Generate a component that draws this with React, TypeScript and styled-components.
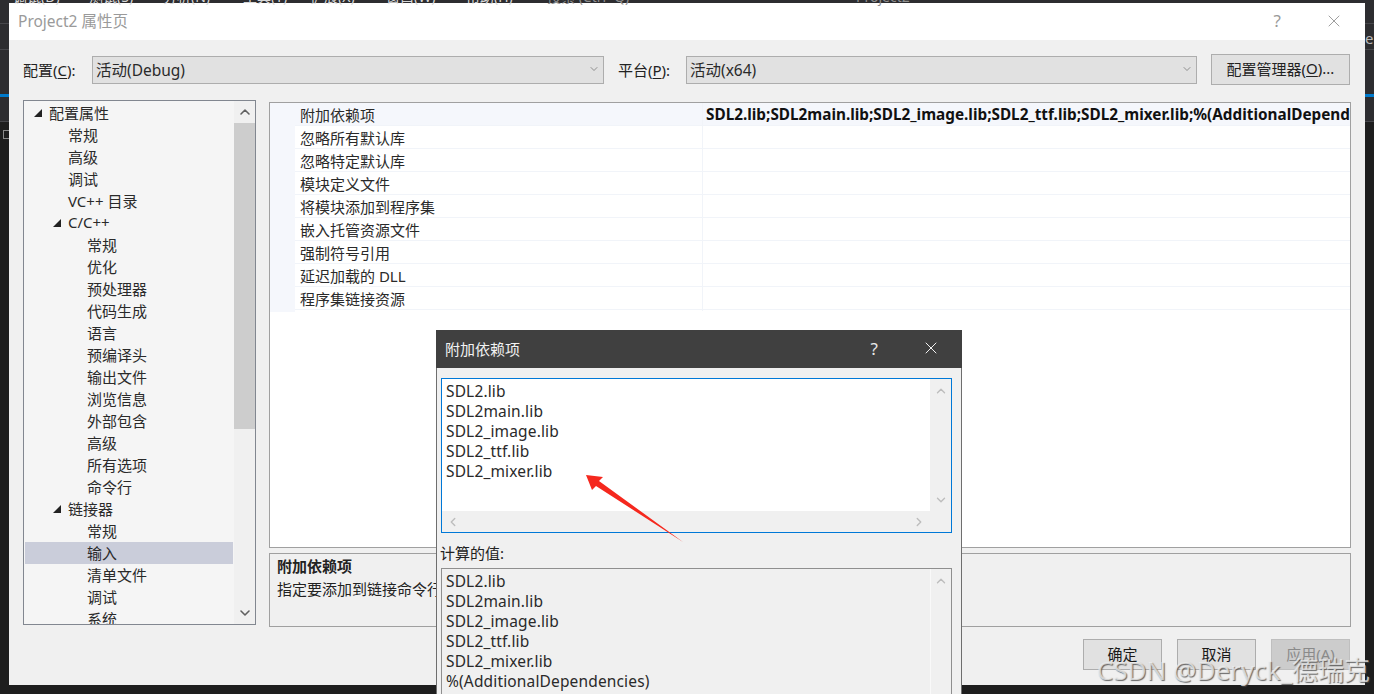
import React from "react";
import styled, { createGlobalStyle } from "styled-components";
import { ChevronDown, ChevronUp, ChevronLeft, ChevronRight, X } from "lucide-react";

const FONT = `"Noto Sans", "Noto Sans CJK SC", sans-serif`;

const GlobalStyle = createGlobalStyle`
  html, body {
    margin: 0;
    padding: 0;
    width: 1374px;
    height: 694px;
    overflow: hidden;
    background: #1e1e1e;
    font-family: ${FONT};
    font-size: 15px;
    color: #222;
  }
  * { box-sizing: border-box; }
`;

const Page = styled.div`
  position: relative;
  width: 1374px;
  height: 694px;
  overflow: hidden;
  padding: 3px 9px 9px;
  background:
    linear-gradient(#47474b, #47474b) 0 23px / 100% 1px no-repeat,
    linear-gradient(#47474b, #47474b) 0 49px / 100% 1px no-repeat,
    linear-gradient(#007acc, #007acc) 0 94px / 100% 3px no-repeat,
    linear-gradient(#47474b, #47474b) 0 121px / 100% 1px no-repeat,
    linear-gradient(#2d2d30, #2d2d30) 0 0 / 100% 121px no-repeat,
    #1e1e1e;
`;

const Backdrop = styled.div`
  position: absolute;
  left: 13px;
  top: -10px;
  display: flex;
  color: #d8d8d8;
  font-size: 14px;
  line-height: 14px;
  white-space: nowrap;
`;

const MenuItem = styled.span<{ $w: number; $dim?: boolean }>`
  width: ${(p) => p.$w}px;
  flex: none;
  color: ${(p) => (p.$dim ? "#8f8f8f" : "#d8d8d8")};
`;

const EdgeBox = styled.div`
  position: absolute;
  left: 3px;
  top: 130px;
  width: 6px;
  height: 9px;
  border: 1px solid #8a8a8a;
  border-right: none;
`;

const EdgeLetter = styled.span`
  position: absolute;
  left: 1365px;
  top: 28px;
  color: #b8b8b8;
  font-size: 15px;
  line-height: 20px;
`;

const Window = styled.div`
  width: 1356px;
  height: 682px;
  background: #f0f0f0;
  display: flex;
  flex-direction: column;
`;

const TitleBar = styled.div`
  height: 37px;
  flex: none;
  background: #fff;
  display: flex;
  align-items: center;
  padding: 0 21px 2px 9px;
  color: #9a9a9a;
  font-size: 15.5px;
`;

const TitleText = styled.span`
  flex: 1;
`;

const TitleQuestion = styled.span`
  font-size: 17px;
  color: #9a9a9a;
  margin-right: 43px;
`;

const ConfigRow = styled.div`
  height: 60px;
  flex: none;
  display: flex;
  align-items: center;
  padding: 0 15px 0 14px;
`;

const ConfigLabel = styled.span`
  font-size: 15px;
  width: 69px;
  flex: none;
  padding-bottom: 2px;
  u { text-underline-offset: 2px; }
`;

const Combo = styled.div<{ $w: number }>`
  width: ${(p) => p.$w}px;
  height: 28px;
  flex: none;
  background: #e1e1e1;
  border: 1px solid #adadad;
  display: flex;
  align-items: center;
  justify-content: space-between;
  padding: 0 3px 2px 3px;
  font-size: 15.5px;
  color: #2a2a2a;
`;

const PlatformLabel = styled(ConfigLabel)`
  width: 68px;
  margin-left: 14px;
`;

const ManagerButton = styled.div`
  width: 139px;
  height: 31px;
  flex: none;
  margin: -2px 0 0 14px;
  background: #e1e1e1;
  border: 1px solid #adadad;
  display: flex;
  align-items: center;
  justify-content: center;
  padding-bottom: 2px;
  font-size: 15px;
  white-space: nowrap;
  u { text-underline-offset: 2px; }
`;

const Content = styled.div`
  flex: 1;
  display: flex;
  gap: 13px;
  padding: 0 14px;
  align-items: flex-start;
`;

const Tree = styled.div`
  width: 233px;
  height: 525px;
  flex: none;
  border: 1px solid #828790;
  background: #f5f5f5;
  display: flex;
  overflow: hidden;
`;

const TreeList = styled.div`
  flex: 1;
  padding: 1px 1px 0 1px;
  overflow: hidden;
`;

const TreeRow = styled.div<{ $level: number; $selected?: boolean }>`
  height: 22px;
  display: flex;
  align-items: center;
  font-size: 15px;
  white-space: nowrap;
  color: #2a2a2a;
  padding-left: ${(p) => [24, 43, 62][p.$level]}px;
  padding-bottom: 2px;
  background: ${(p) => (p.$selected ? "#cacdda" : "transparent")};
  position: relative;
`;

const Caret = styled.span`
  position: absolute;
  margin-left: -15px;
  top: 7px;
  width: 0;
  height: 0;
  border-left: 8px solid transparent;
  border-bottom: 8px solid #222;
`;

const TreeScroll = styled.div`
  width: 21px;
  flex: none;
  background: #f0f0f0;
  display: flex;
  flex-direction: column;
  align-items: center;
  color: #606060;
`;

const ScrollCap = styled.div`
  height: 22px;
  width: 100%;
  flex: none;
  display: flex;
  align-items: center;
  justify-content: center;
`;

const TreeThumb = styled.div`
  width: 100%;
  height: 306px;
  flex: none;
  background: #cdcdcd;
`;

const ScrollGap = styled.div`
  flex: 1;
`;

const RightColumn = styled.div`
  width: 1082px;
  flex: none;
  display: flex;
  flex-direction: column;
  gap: 5px;
  padding-top: 2px;
`;

const Grid = styled.div`
  height: 446px;
  background: #fff;
  border: 1px solid #a0a0a0;
  overflow: hidden;
`;

const GridRow = styled.div<{ $first?: boolean }>`
  height: 23px;
  display: grid;
  grid-template-columns: 25px 407px 1fr;
  font-size: 15px;
  color: #2a2a2a;
  background: ${(p) => (p.$first ? "#f5f7fc" : "#fff")};
  border-bottom: 1px solid #f1f4f9;
`;

const Gutter = styled.div`
  background: #f5f7fc;
  margin-bottom: -1px;
`;

const GridName = styled.div`
  padding-left: 5px;
  line-height: 24px;
  white-space: nowrap;
`;

const GridValue = styled.div`
  border-left: 1px solid #f1f4f9;
  padding-left: 3px;
  line-height: 23px;
  font-size: 15.3px;
  font-weight: 700;
  white-space: nowrap;
  overflow: hidden;
  color: #111;
`;

const Description = styled.div`
  height: 74px;
  border: 1px solid #a0a0a0;
  padding: 1px 7px;
  font-size: 15px;
  line-height: 23px;
  overflow: hidden;
  white-space: nowrap;
`;

const DescTitle = styled.div`
  font-weight: 700;
`;

const Footer = styled.div`
  height: 31px;
  flex: none;
  display: flex;
  justify-content: flex-end;
  gap: 15px;
  margin: 0 15px 15px 0;
`;

const FooterButton = styled.div<{ $disabled?: boolean }>`
  width: 79px;
  height: 31px;
  background: ${(p) => (p.$disabled ? "#cccccc" : "#e1e1e1")};
  border: 1px solid ${(p) => (p.$disabled ? "#bfbfbf" : "#adadad")};
  color: ${(p) => (p.$disabled ? "#8a8a8a" : "#1a1a1a")};
  font-size: 15px;
  padding-bottom: 2px;
  display: flex;
  align-items: center;
  justify-content: center;
`;

const Dialog = styled.div`
  position: absolute;
  left: 436px;
  top: 330px;
  width: 526px;
  height: 380px;
  background: #f0f0f0;
  border: 1px solid #6e6e6e;
  border-top: none;
  display: flex;
  flex-direction: column;
`;

const DialogTitle = styled.div`
  height: 38px;
  flex: none;
  margin: 0 -1px;
  background: #404040;
  color: #f2f2f2;
  display: flex;
  align-items: center;
  padding: 0 21px 2px 9px;
  font-size: 15px;
`;

const DialogQuestion = styled.span`
  margin-right: 43px;
  font-size: 17px;
  color: #e8e8e8;
`;

const DialogBody = styled.div`
  padding: 10px 9px 0 4px;
  display: flex;
  flex-direction: column;
`;

const EditBox = styled.div`
  height: 155px;
  border: 1px solid #0078d7;
  display: grid;
  grid-template-columns: 1fr 21px;
  grid-template-rows: 1fr 21px;
`;

const ComputedBox = styled.div`
  height: 160px;
  border: 1px solid #8f8f8f;
  display: grid;
  grid-template-columns: 1fr 21px;
`;

const LibText = styled.div<{ $white?: boolean }>`
  padding: 2px 4px;
  background: ${(p) => (p.$white ? "#fff" : "transparent")};
  font-size: 15.5px;
  line-height: 20px;
  letter-spacing: 0.15px;
  color: #2a2a2a;
  white-space: nowrap;
`;

const VScroll = styled.div<{ $divider?: boolean }>`
  display: flex;
  flex-direction: column;
  justify-content: space-between;
  align-items: center;
  padding: 5px 0 4px;
  color: #bdbdbd;
  border-left: ${(p) => (p.$divider ? "1px solid #f9f9f9" : "none")};
`;

const HScroll = styled.div`
  display: flex;
  justify-content: space-between;
  align-items: center;
  padding: 0 4px;
  color: #bdbdbd;
`;

const ComputedLabel = styled.div`
  margin: 10px 0 5px -1px;
  height: 20px;
  line-height: 20px;
  font-size: 15px;
`;

const Arrow = styled.svg`
  position: absolute;
  left: 580px;
  top: 468px;
  width: 110px;
  height: 80px;
`;

const Watermark = styled.div`
  position: absolute;
  right: 4px;
  top: 654px;
  font-size: 26px;
  line-height: 32px;
  color: rgba(240, 240, 240, 0.75);
  text-shadow: 1px 1px 1px rgba(70, 70, 70, 0.8);
  white-space: nowrap;
`;

const menu: { t: string; w: number; dim?: boolean }[] = [
  { t: "调试(D)", w: 76 },
  { t: "测试(S)", w: 74 },
  { t: "分析(N)", w: 80 },
  { t: "工具(T)", w: 67 },
  { t: "扩展(X)", w: 76 },
  { t: "窗口(W)", w: 80 },
  { t: "帮助(H)", w: 81 },
  { t: "搜索 (Ctrl+Q)", w: 309, dim: true },
  { t: "Project2", w: 90, dim: true },
];

const tree: { t: string; l: number; open?: boolean; sel?: boolean }[] = [
  { t: "配置属性", l: 0, open: true },
  { t: "常规", l: 1 },
  { t: "高级", l: 1 },
  { t: "调试", l: 1 },
  { t: "VC++ 目录", l: 1 },
  { t: "C/C++", l: 1, open: true },
  { t: "常规", l: 2 },
  { t: "优化", l: 2 },
  { t: "预处理器", l: 2 },
  { t: "代码生成", l: 2 },
  { t: "语言", l: 2 },
  { t: "预编译头", l: 2 },
  { t: "输出文件", l: 2 },
  { t: "浏览信息", l: 2 },
  { t: "外部包含", l: 2 },
  { t: "高级", l: 2 },
  { t: "所有选项", l: 2 },
  { t: "命令行", l: 2 },
  { t: "链接器", l: 1, open: true },
  { t: "常规", l: 2 },
  { t: "输入", l: 2, sel: true },
  { t: "清单文件", l: 2 },
  { t: "调试", l: 2 },
  { t: "系统", l: 2 },
];

const props = [
  "附加依赖项",
  "忽略所有默认库",
  "忽略特定默认库",
  "模块定义文件",
  "将模块添加到程序集",
  "嵌入托管资源文件",
  "强制符号引用",
  "延迟加载的 DLL",
  "程序集链接资源",
];

const libs = ["SDL2.lib", "SDL2main.lib", "SDL2_image.lib", "SDL2_ttf.lib", "SDL2_mixer.lib"];

export default function App() {
  return (
    <Page>
      <GlobalStyle />
      <Backdrop>
        {menu.map((m) => (
          <MenuItem key={m.t} $w={m.w} $dim={m.dim}>
            {m.t}
          </MenuItem>
        ))}
      </Backdrop>
      <EdgeBox />
      <EdgeLetter>e</EdgeLetter>
      <Window>
        <TitleBar>
          <TitleText>Project2 属性页</TitleText>
          <TitleQuestion>?</TitleQuestion>
          <X size={20} strokeWidth={1} color="#8a8a8a" />
        </TitleBar>
        <ConfigRow>
          <ConfigLabel>
            配置(<u>C</u>):
          </ConfigLabel>
          <Combo $w={512}>
            活动(Debug)
            <ChevronDown size={12} strokeWidth={1.2} color="#555" />
          </Combo>
          <PlatformLabel>
            平台(<u>P</u>):
          </PlatformLabel>
          <Combo $w={511}>
            活动(x64)
            <ChevronDown size={12} strokeWidth={1.2} color="#555" />
          </Combo>
          <ManagerButton>
            配置管理器(<u>O</u>)...
          </ManagerButton>
        </ConfigRow>
        <Content>
          <Tree>
            <TreeList>
              {tree.map((r, i) => (
                <TreeRow key={i} $level={r.l} $selected={r.sel}>
                  {r.open && <Caret />}
                  {r.t}
                </TreeRow>
              ))}
            </TreeList>
            <TreeScroll>
              <ScrollCap>
                <ChevronUp size={16} strokeWidth={2.4} />
              </ScrollCap>
              <TreeThumb />
              <ScrollGap />
              <ScrollCap>
                <ChevronDown size={16} strokeWidth={2.4} />
              </ScrollCap>
            </TreeScroll>
          </Tree>
          <RightColumn>
            <Grid>
              {props.map((p, i) => (
                <GridRow key={p} $first={i === 0}>
                  <Gutter />
                  <GridName>{p}</GridName>
                  <GridValue>
                    {i === 0 && "SDL2.lib;SDL2main.lib;SDL2_image.lib;SDL2_ttf.lib;SDL2_mixer.lib;%(AdditionalDependencies)"}
                  </GridValue>
                </GridRow>
              ))}
            </Grid>
            <Description>
              <DescTitle>附加依赖项</DescTitle>
              指定要添加到链接命令行的附加项
            </Description>
          </RightColumn>
        </Content>
        <Footer>
          <FooterButton>确定</FooterButton>
          <FooterButton>取消</FooterButton>
          <FooterButton $disabled>应用(A)</FooterButton>
        </Footer>
      </Window>
      <Dialog>
        <DialogTitle>
          <TitleText>附加依赖项</TitleText>
          <DialogQuestion>?</DialogQuestion>
          <X size={20} strokeWidth={1.2} color="#f2f2f2" />
        </DialogTitle>
        <DialogBody>
          <EditBox>
            <LibText $white>
              {libs.map((l) => (
                <div key={l}>{l}</div>
              ))}
            </LibText>
            <VScroll>
              <ChevronUp size={14} strokeWidth={2.4} />
              <ChevronDown size={14} strokeWidth={2.4} />
            </VScroll>
            <HScroll>
              <ChevronLeft size={14} strokeWidth={2.4} />
              <ChevronRight size={14} strokeWidth={2.4} />
            </HScroll>
          </EditBox>
          <ComputedLabel>计算的值:</ComputedLabel>
          <ComputedBox>
            <LibText>
              {libs.map((l) => (
                <div key={l}>{l}</div>
              ))}
              <div>%(AdditionalDependencies)</div>
            </LibText>
            <VScroll $divider>
              <ChevronUp size={14} strokeWidth={2.4} />
              <ChevronDown size={14} strokeWidth={2.4} />
            </VScroll>
          </ComputedBox>
        </DialogBody>
      </Dialog>
      <Arrow viewBox="0 0 110 80">
        <polygon points="6,7 23,9 19,13 103,74 16,18 12,22" fill="#f5281e" />
      </Arrow>
      <Watermark>CSDN @Deryck_德瑞克</Watermark>
    </Page>
  );
}
